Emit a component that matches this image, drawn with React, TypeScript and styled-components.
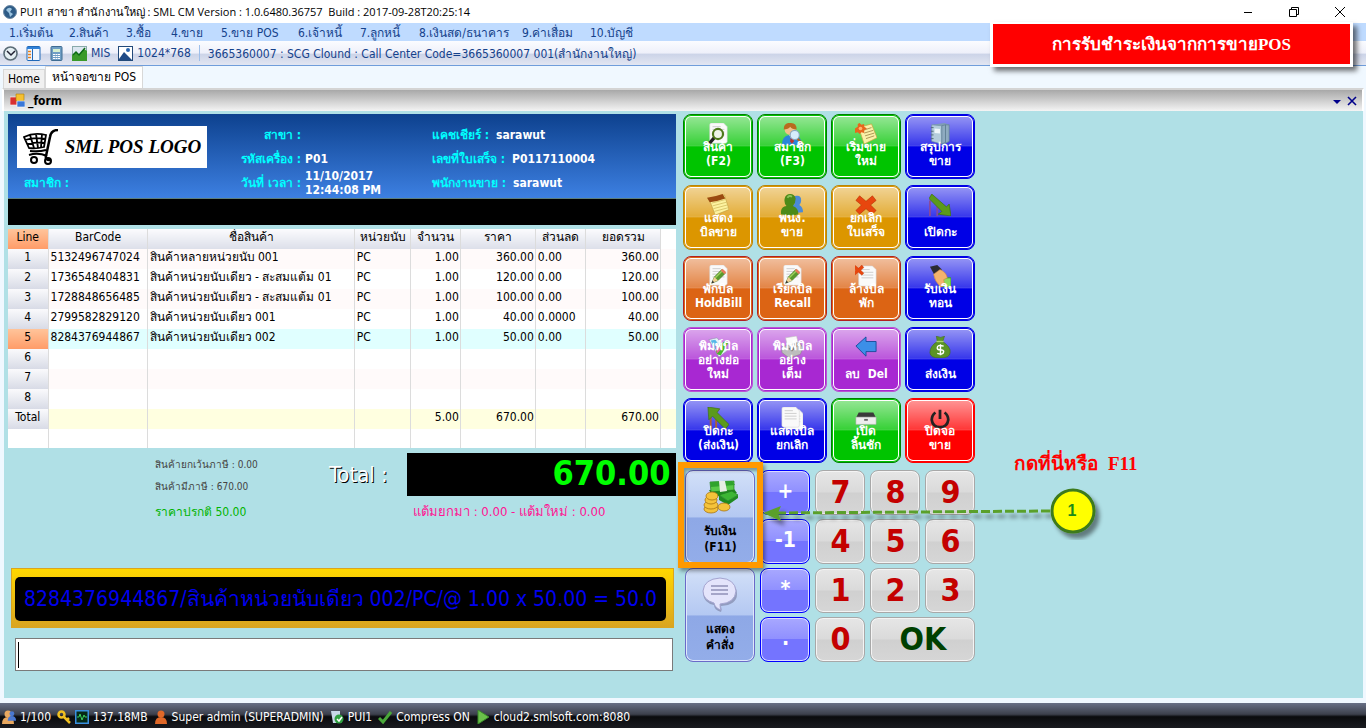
import React from "react";
import styled, { createGlobalStyle } from "styled-components";

const ui = `"DejaVu Sans Condensed", "Noto Sans", sans-serif`;
const serif = `"Liberation Serif", serif`;

const GlobalStyle = createGlobalStyle`
  * { box-sizing: border-box; }
  body { margin: 0; background: #fff; }
  button, input { font: inherit; }
`;

const Page = styled.div`
  position: relative;
  display: flex;
  flex-direction: column;
  min-height: 100vh;
  background: #f0f8ff;
  font-family: ${ui};
  font-size: 12px;
  color: #000;
`;

const TitleBar = styled.header`
  display: flex;
  align-items: center;
  height: 23px;
  padding: 0 18px 0 3px;
  gap: 3px;
  background: #fff;
  font-family: "Open Sans", sans-serif;
  font-size: 11px;
  white-space: pre;
`;

const WindowButtons = styled.div`
  display: flex;
  gap: 30px;
  margin-left: auto;
`;

const PlainButton = styled.button`
  display: flex;
  align-items: center;
  padding: 0;
  border: 0;
  background: none;
  color: inherit;
`;

const MenuBar = styled.nav`
  display: flex;
  align-items: center;
  height: 18px;
  padding-left: 9px;
  gap: 19px;
  background: #bfdbff;
`;

const MenuLink = styled.a<{ $w: number }>`
  width: ${(p) => p.$w}px;
  color: #15428b;
  text-decoration: none;
  white-space: nowrap;
`;

const ToolBar = styled.div`
  display: flex;
  align-items: center;
  height: 25px;
  padding-left: 3px;
  gap: 8px;
  color: #15428b;
  background: linear-gradient(#fbfcff 0%, #eef0fa 50%, #ccd4e8 55%, #e2e6f2 100%);
  border-bottom: 1px solid #6f9ddb;
  white-space: nowrap;
`;

const ToolItem = styled(PlainButton)`
  gap: 4px;
`;

const Divider = styled.span`
  width: 1px;
  height: 16px;
  background: #9ebfea;
`;

const Tabs = styled.div`
  display: flex;
  align-items: flex-end;
  height: 22px;
  padding-left: 3px;
`;

const Tab = styled.button<{ $active?: boolean }>`
  height: ${(p) => (p.$active ? 22 : 19)}px;
  padding: ${(p) => (p.$active ? "0 6px 2px" : "0 4px")};
  border: 1px solid #d8d8d8;
  border-bottom: 0;
  background: ${(p) => (p.$active ? "#fff" : "#f0f0f0")};
  white-space: nowrap;
`;

const FormBar = styled.div`
  display: flex;
  align-items: center;
  height: 23px;
  margin: 0 2px;
  padding: 0 5px 0 6px;
  gap: 3px;
  border: 2px solid #fff;
  border-top-color: #d4d4d4;
  border-bottom: 0;
  background: linear-gradient(#a8a8a8, #f4f4f4);
  font-weight: bold;
`;

const FormTools = styled.div`
  display: flex;
  gap: 5px;
  margin-left: auto;
  color: #00008b;
`;

const Workspace = styled.main`
  flex: 1;
  display: grid;
  grid-template-columns: minmax(560px, 668fr) minmax(292px, 679fr);
  column-gap: 7px;
  padding: 3px 0 27px 4px;
  margin: 0 3px 0 4px;
  background: #b0e0e6;
`;

const Sale = styled.section`
  display: flex;
  flex-direction: column;
`;

const SaleHead = styled.div`
  display: grid;
  grid-template-columns: 200px 215px 1fr;
  grid-template-rows: repeat(3, 24px);
  align-items: center;
  height: 85px;
  padding: 9px 9px 3px;
  border-bottom: 1px solid #5c7f7f;
  background: linear-gradient(#0d418e, #3d80e2);
  color: #fff;
  font-weight: bold;
`;

const Logo = styled.div`
  grid-row: span 2;
  display: flex;
  align-items: center;
  justify-content: space-evenly;
  width: 190px;
  height: 42px;
  background: #fff;
  color: #000;
  font: italic bold 19px ${serif};
  white-space: nowrap;
`;

const Field = styled.div<{ $label?: number }>`
  display: grid;
  grid-template-columns: ${(p) => (p.$label ? `${p.$label}px` : "auto")} 1fr;
  align-items: center;
  column-gap: ${(p) => (p.$label ? 4 : 7)}px;
  line-height: 14px;
  white-space: nowrap;
  & > span { color: #00ffff; text-align: ${(p) => (p.$label ? "right" : "left")}; }
  & > b { white-space: pre; }
`;

const MemberField = styled(Field)`
  padding-left: 7px;
`;

const NoticeStrip = styled.div`
  height: 26px;
  margin-bottom: 4px;
  background: #000;
`;

const Lines = styled.table`
  width: 100%;
  table-layout: fixed;
  border-collapse: collapse;
  background: #fff;
  line-height: 16px;
  tr { height: 20px; }
  tr:last-child { height: 19px; }
  th, td {
    padding: 0 1px 4px 2px;
    font-weight: normal;
    text-align: left;
    white-space: nowrap;
    overflow: hidden;
    border-right: 1px solid #dcdcdc;
  }
  td:last-child, thead th:last-child { border-right: 0; }
`;

const HeadCell = styled.th`
  && { text-align: center; }
  background: linear-gradient(#fbfbfd, #dcdfe9);
`;

const LineHead = styled.th<{ $hot?: boolean }>`
  && { text-align: center; padding-right: 2px; }
  background: ${(p) => (p.$hot ? "linear-gradient(#ffc49a, #ff9c68)" : "linear-gradient(#fafafc, #d8dbe6)")};
`;

const Filler = styled.th`
  background: #fff;
`;

const LineRow = styled.tr<{ $bg: string }>`
  td { background: ${(p) => p.$bg}; }
`;

const NumCell = styled.td`
  && { text-align: right; }
`;

const Totals = styled.div`
  display: grid;
  grid-template-columns: 147px 174px 78px 1fr;
  grid-template-rows: 23px 20px 30px;
  align-items: center;
  margin-top: 5px;
`;

const TaxLine = styled.div`
  grid-column: 2;
  color: #444;
  font-size: 10px;
`;

const TotalLabel = styled.div`
  grid-column: 3;
  grid-row: 1 / span 2;
  color: #fff;
  font-size: 22px;
  text-shadow: 1px 1px 0 #000;
  white-space: nowrap;
`;

const TotalBox = styled.output`
  grid-column: 4;
  grid-row: 1 / span 2;
  height: 43px;
  padding-right: 6px;
  background: #000;
  color: #00ff00;
  font-weight: bold;
  font-size: 34px;
  line-height: 41px;
  text-align: right;
`;

const NormalPrice = styled.div`
  grid-column: 2;
  color: #00b400;
`;

const Points = styled.div`
  grid-column: 4;
  padding-left: 6px;
  color: #ff1493;
  font-size: 13px;
  white-space: nowrap;
`;

const Ticker = styled.div`
  margin: 42px 2px 10px 3px;
  padding: 8px 7px 6px 3px;
  border: 1px solid #daa520;
  background: linear-gradient(#ffd700, #daa520);
`;

const TickerText = styled.div`
  height: 44px;
  padding-left: 9px;
  overflow: hidden;
  border-radius: 5px;
  background: #000;
  color: #0000ee;
  font-size: 21px;
  line-height: 44px;
  white-space: nowrap;
`;

const Entry = styled.label`
  display: flex;
  align-items: center;
  height: 33px;
  margin: 0 3px 0 7px;
  padding-left: 2px;
  border: 1px solid #7a7a7a;
  background: #fff;
`;

const Caret = styled.span`
  width: 1px;
  height: 26px;
  background: #000;
`;

const EntryInput = styled.input`
  flex: 1;
  height: 100%;
  border: 0;
  outline: 0;
  background: transparent;
  font-size: 20px;
  caret-color: transparent;
`;

const Controls = styled.section`
  display: flex;
  flex-direction: column;
  align-items: flex-start;
  gap: 7px;
`;

const ActionGrid = styled.div`
  display: grid;
  grid-template-columns: repeat(4, 70px);
  grid-auto-rows: 65px;
  gap: 6px 4px;
`;

type Tone = { base: string; edge: string };
const tones: Record<string, Tone> = {
  green: { base: "#00c400", edge: "#008000" },
  blue: { base: "#0000e6", edge: "#0000e6" },
  gold: { base: "#dc9600", edge: "#b8860b" },
  orange: { base: "#dc6414", edge: "#b22222" },
  purple: { base: "#a828d2", edge: "#ba55d3" },
  red: { base: "#ff0000", edge: "#ff0000" },
};

const ActionButton = styled.button<{ $tone: Tone }>`
  position: relative;
  display: flex;
  align-items: flex-end;
  justify-content: center;
  padding: 0 2px 10px;
  border: 1px solid ${(p) => p.$tone.edge};
  border-radius: 8px;
  background:
    linear-gradient(rgba(255, 255, 255, 0.6), rgba(255, 255, 255, 0.22) 48%, rgba(255, 255, 255, 0.3) 48%, rgba(255, 255, 255, 0) 51%),
    ${(p) => p.$tone.base};
  box-shadow: inset 0 0 0 1px ${(p) => p.$tone.base}, inset 0 0 0 2px #fff;
  color: #fff;
  font-weight: bold;
  line-height: 14px;
  text-align: center;
  white-space: pre;
`;

const ActionIcon = styled.span`
  position: absolute;
  top: 8px;
  left: 50%;
  width: 22px;
  height: 22px;
  margin-left: -11px;
`;

const ActionText = styled.span`
  position: relative;
`;

const Keypad = styled.div`
  position: relative;
  display: grid;
  grid-template-columns: 70px repeat(4, 50px);
  grid-auto-rows: 45px;
  gap: 4px 5px;
  margin-left: 2px;
`;

const WideAction = styled.button`
  grid-column: 1;
  grid-row: span 2;
  display: flex;
  flex-direction: column;
  align-items: center;
  gap: 8px;
  padding: 8px 0 0;
  border: 1px solid #6a6ac8;
  border-radius: 8px;
  background: linear-gradient(#d2e0f8, #b4c8f2 50%, #8ea8e6 51%, #93ade9);
  box-shadow: inset 0 0 0 1px #dfe8fb;
  font-weight: bold;
  line-height: 16px;
  white-space: pre;
`;

const OpKey = styled.button`
  grid-column: 2;
  padding: 0 0 4px;
  border: 1px solid #0000ff;
  border-radius: 8px;
  background: linear-gradient(#a8a8ff, #9090ff 48%, #7474ff 50%, #7474ff);
  box-shadow: inset 0 0 0 1px #dcdcff;
  color: #fff;
  font-weight: bold;
  font-size: 21px;
`;

const DigitKey = styled.button<{ $ok?: boolean }>`
  grid-column: ${(p) => (p.$ok ? "span 2" : "auto")};
  padding: 0 0 2px;
  border: 1px solid #a8a8a8;
  border-radius: 8px;
  background: linear-gradient(#e6e6e6, #dadada 49%, #d0d0d0 51%, #d6d6d6);
  box-shadow: inset 0 0 0 1px #f4f4f4;
  color: ${(p) => (p.$ok ? "#004000" : "#c40000")};
  font-weight: bold;
  font-size: 32px;
  line-height: 40px;
`;

const Highlight = styled.div`
  position: absolute;
  top: -8px;
  left: -7px;
  width: 85px;
  height: 106px;
  border: 6px solid #ff9900;
  box-shadow: 2px 3px 4px rgba(0, 0, 0, 0.4), inset 2px 3px 3px rgba(0, 0, 0, 0.3);
  pointer-events: none;
`;

const Pointer = styled.svg`
  position: absolute;
  top: 10px;
  left: 76px;
  pointer-events: none;
`;

const PointerHint = styled.p`
  position: absolute;
  top: -20px;
  left: 329px;
  margin: 0;
  color: #ff0000;
  font: bold 19px/28px ${serif};
  white-space: pre;
`;

const Banner = styled.h1`
  position: absolute;
  top: 22px;
  right: 13px;
  width: 363px;
  height: 45px;
  margin: 0;
  border: 3px solid #fff;
  border-top-width: 2px;
  background: #ff0000;
  box-shadow: 4px 4px 5px rgba(0, 0, 0, 0.55);
  color: #fff;
  font: bold 17px/42px ${serif};
  text-align: center;
  white-space: nowrap;
`;

const StatusBar = styled.footer`
  display: flex;
  align-items: center;
  height: 25px;
  margin-top: 5px;
  padding: 3px 0 0 1px;
  gap: 4px;
  background: linear-gradient(#687086, #3c404c 45%, #0a0b0e 55%, #1a1b20);
  color: #fff;
  white-space: nowrap;
  & > span { margin-right: 2px; }
`;

const Drawing = styled.svg`
  display: block;
  flex: none;
`;

const Svg = ({ s = 24, w, children }: { s?: number; w?: number; children: React.ReactNode }) => (
  <Drawing width={w ?? s} height={w ?? s} viewBox={`0 0 ${s} ${s}`} fill="none" aria-hidden="true">
    {children}
  </Drawing>
);

const Paper = ({ x = 2, y = 0 }: { x?: number; y?: number }) => (
  <g transform={`translate(${x} ${y})`}>
    <path d="M2 0h13l4 4v16q0 2-2 2H2q-2 0-2-2V2q0-2 2-2z" fill="#fafafa" stroke="#d4d4d4" strokeWidth=".6" />
    <path d="M3 4h9M3 7h13M3 10h13M3 13h13" stroke="#ccc" />
  </g>
);

const Pencil = () => (
  <>
    <path d="M5 20l3-7 8-8 4 4-8 8z" fill="#5a9a2c" stroke="#3c6e1a" strokeWidth=".6" />
    <path d="M9 14l8-8" stroke="#9ed05e" strokeWidth="1.5" />
    <path d="M5 20l3-7 4 4z" fill="#f1cf92" />
    <path d="M5 20l1-3 2 2z" fill="#333" />
    <path d="M15 6l2-2 4 4-2 2z" fill="#e77b5c" />
  </>
);

const Cross = ({ t }: { t?: string }) => (
  <path
    transform={t}
    d="M5 2l7 6 7-6 4 5-6 5 6 6-4 4-7-6-7 6-4-4 6-6-6-5z"
    fill="#e8460e"
    stroke="#b83508"
    strokeWidth=".7"
  />
);

const icons: Record<string, React.ReactNode> = {
  search: (
    <>
      <Paper x={3} />
      <path d="M8 16l-6 7" stroke="#222" strokeWidth="3.5" />
      <circle cx="12" cy="12" r="5.5" fill="#eef4ea" stroke="#4e7a1c" strokeWidth="2.4" />
    </>
  ),
  member: (
    <>
      <path d="M1 24q0-10 8-11h6q8 2 8 11z" fill="#2a86d8" />
      <path d="M9 13l3 6 3-6z" fill="#fff" />
      <path d="M11 14l-1 6 2 3 2-3-1-6z" fill="#b33" />
      <circle cx="10" cy="7" r="6" fill="#f2c08a" />
      <path d="M3 7q0-8 8-7 6 0 6 7-5 0-7-3-2 3-7 3z" fill="#b96a1e" />
      <path d="M18 17l5 6" stroke="#b5651d" strokeWidth="2.5" />
      <circle cx="15" cy="13" r="5" fill="#d6ecfb" stroke="#8aa8bd" strokeWidth="1.2" />
    </>
  ),
  note: (
    <>
      <path d="M4 5l14-4 6 15-14 7z" fill="#fbf0a8" stroke="#c8a840" strokeWidth=".8" />
      <path d="M9 8l9-3M10 11l10-3M11 14l10-3M12 17l9-3" stroke="#a89050" />
      <path d="M5 0l2 2 3-1v3l3 2-3 2v3l-3-1-2 2-2-2-3 1V8L0 6l3-2V1z" fill="#e8661c" />
      <circle cx="6" cy="6" r="2" fill="#ffb46a" />
    </>
  ),
  ledger: (
    <>
      <path d="M3 2l14-2 5 2v18l-5 3-14-3z" fill="#7f9db4" />
      <path d="M3 2l11 1v20L3 20z" fill="#b4cddc" stroke="#6f8ea4" strokeWidth=".7" />
      <path d="M14 3l4-1v19l-4 2zM18 2l4 0v18l-4 2z" fill="#8eabc0" stroke="#5d7b91" strokeWidth=".7" />
      <path d="M6 6l6 .5v5L6 11z" fill="#eef6fa" />
      <path d="M2 5h3M2 9h3M2 13h3M2 17h3" stroke="#51677a" />
    </>
  ),
  notepad: (
    <>
      <path d="M2 5l17-4 5 16-15 6z" fill="#fdf3a0" stroke="#c0a040" strokeWidth=".7" />
      <path d="M5 10l15-4M6 13l15-4M7 16l15-4M8 19l15-4" stroke="#d8c468" />
      <path d="M0 4q9-1 17-4l3 5Q12 8 3 9z" fill="#9a4a10" />
    </>
  ),
  people: (
    <>
      <path d="M10 21q0-8 5-10-2-2-2-5 1-5 5-4 4 0 4 5 0 3-2 5 4 2 4 8z" fill="#4a8ad8" />
      <path d="M0 22q-1-8 6-9-3-3-2-8 1-5 6-5t6 5q0 5-3 8 6 2 6 9-9 3-19 0z" fill="#4c8a18" />
      <path d="M7 4q2-3 5-1" stroke="#8cc45a" strokeWidth="2" />
    </>
  ),
  cross: <Cross />,
  down: (
    <>
      <path d="M1 7v17M9 12v12" stroke="#8a4a9a" strokeWidth="2" />
      <path d="M3 0L19 14l3-3 2 13-14-2 4-3L0 5z" fill="#5b9a1c" stroke="#3d6f10" strokeWidth=".7" />
    </>
  ),
  up: (
    <>
      <path d="M4 8v16M10 13v11" stroke="#b06030" strokeWidth="2" />
      <path d="M1 0l13 2-3 4 13 13-4 5L6 10l-4 4z" fill="#5b9a1c" stroke="#3d6f10" strokeWidth=".7" />
    </>
  ),
  edit: (
    <>
      <Paper x={3} />
      <Pencil />
    </>
  ),
  clear: (
    <>
      <Paper x={4} y={1} />
      <Cross t="translate(-3 -1) scale(.55)" />
    </>
  ),
  pay: (
    <>
      <path d="M13 14h11v10H11z" fill="#8edb5a" stroke="#2f9c2b" />
      <path d="M1 2l8-2 5 5-8 6z" fill="#2b2b33" />
      <path d="M5 10l7-5q7 3 8 9l-4 2 1 6-4 2q-7-6-8-14z" fill="#f3b36d" stroke="#c98240" strokeWidth=".6" />
    </>
  ),
  printTag: (
    <>
      <path d="M2 4l9-2 11 14-9 7z" fill="#e6f2f8" stroke="#88a" strokeWidth=".6" />
      <path d="M4 5l5-1 5 7-5 4z" fill="#56b8e8" />
      <path d="M10 14l10-9 3 3-8 13q-6 0-5-7z" fill="#48b82c" />
      <path d="M9 10l7 4-5 5z" fill="#e85ca0" />
    </>
  ),
  printer: (
    <>
      <path d="M5 2l12-2 3 13-12 4z" fill="#fafafa" stroke="#bbb" strokeWidth=".6" />
      <path d="M1 12l19-5 4 6-3 7-12 4-8-6z" fill="#bdbdbd" stroke="#888" strokeWidth=".6" />
      <path d="M8 14l9-7 3 2-8 8z" fill="#777" />
    </>
  ),
  left: <path d="M1 11L12 1v5h11v11H12v5z" fill="#3c8fe8" stroke="#174a9a" />,
  money: (
    <>
      <path d="M8 0q5 3 9 0l-2 6q9 6 8 12 0 6-11 6T1 18Q1 11 9 6z" fill="#5b9426" stroke="#3e6c14" strokeWidth=".6" />
      <path d="M8 6h8" stroke="#a8d070" strokeWidth="1.5" />
      <path d="M16 11q-7-2-7 2 0 2 3 2 4 0 4 2 0 4-7 2M12.500 9v12" stroke="#fff" strokeWidth="1.600" />
    </>
  ),
  pages: (
    <>
      <Paper x={5} y={3} />
      <Paper x={1} />
    </>
  ),
  drawer: (
    <>
      <path d="M4 6h16l3 6H1z" fill="#3a3a3a" />
      <path d="M1 11h22v8H1z" fill="#eee" stroke="#aaa" strokeWidth=".6" />
      <path d="M10 14h4" stroke="#666" strokeWidth="2" />
    </>
  ),
  power: <path d="M7 6q-4 3-4 8 1 8 9 8t9-8q0-5-4-8M12 3v10" stroke="#222" strokeWidth="3" />,
};

const coins = [
  [9, 30, 7],
  [9, 26, 7],
  [22, 28, 6],
  [9, 21, 6],
  [10, 17, 6],
];

const Cash = () => (
  <Svg s={36}>
    <path d="M7 11l4 7 24-4-3-4z" fill="#1f8a20" />
    <path d="M8 3l24-1v9l-23 2z" fill="#58c948" stroke="#1f7a20" strokeWidth=".7" />
    <path d="M8 3l22-1 3 4-24 2z" fill="#2fa32c" />
    <path d="M17 2h6l2 10-7 1z" fill="#e6eee2" />
    <path d="M17 16l13-4 6 4-10 6z" fill="#3cb634" stroke="#1f7a20" strokeWidth=".7" />
    <path d="M17 16l9 6v4l-9-5zM26 22l10-6v3l-10 7z" fill="#1f8a20" />
    {coins.map(([x, y, r]) => (
      <ellipse key={`${x}-${y}`} cx={x} cy={y} rx={r} ry={4} fill="#f5c33a" stroke="#a87410" strokeWidth=".8" />
    ))}
  </Svg>
);

const Speech = () => (
  <Svg s={36}>
    <path d="M18 3q17 1 17 14 0 11-16 12 1 4 0 6-7-2-7-7Q2 26 1 17 1 4 18 3z" fill="#777c9c" opacity=".6" />
    <path d="M18 1q15 1 16 13-1 12-16 13 0 4 1 6-6-2-7-7Q1 23 1 14 2 2 18 1z" fill="#e4e4fb" stroke="#a4a4d0" />
    <path d="M9 9h17M9 13h17M9 17h17" stroke="#9090b8" strokeWidth="1.500" />
  </Svg>
);

const Cart = () => (
  <Svg s={36}>
    <path d="M35 1q-7 0-8 7l-4 19q-1 4 4 4" stroke="#000" strokeWidth="2.500" />
    <path d="M1 8q10-5 22-2l-2 12q-8 2-15 1zM2 11q10-3 20-1M4 15q9-2 18-1M7 6l4 13M13 5l2 14M19 5l-1 13" stroke="#000" strokeWidth="1.800" />
    <path d="M7 22q9 1 16-1M6 26q9-3 18 1" stroke="#000" strokeWidth="2" />
    <circle cx="11" cy="31" r="3" stroke="#000" strokeWidth="2" />
    <circle cx="25" cy="32" r="3" stroke="#000" strokeWidth="2" />
  </Svg>
);

const Person = ({ fill }: { fill: string }) => (
  <g>
    <circle cx="7" cy="4" r="3.500" fill={fill} />
    <path d="M1 14q0-7 6-7t6 7z" fill={fill} />
  </g>
);

const actions: [string, string, string][] = [
  ["green", "search", "สินค้า\n(F2)"],
  ["green", "member", "สมาชิก\n(F3)"],
  ["green", "note", "เริ่มขาย\nใหม่"],
  ["blue", "ledger", "สรุปการ\nขาย"],
  ["gold", "notepad", "แสดง\nบิลขาย"],
  ["gold", "people", "พนง.\nขาย"],
  ["gold", "cross", "ยกเลิก\nใบเสร็จ"],
  ["blue", "down", "เปิดกะ"],
  ["orange", "edit", "พักบิล\nHoldBill"],
  ["orange", "edit", "เรียกบิล\nRecall"],
  ["orange", "clear", "ล้างบิล\nพัก"],
  ["blue", "pay", "รับเงิน\nทอน"],
  ["purple", "printTag", "พิมพ์บิล\nอย่างย่อ\nใหม่"],
  ["purple", "printer", "พิมพ์บิล\nอย่าง\nเต็ม"],
  ["purple", "left", "ลบ  Del"],
  ["blue", "money", "ส่งเงิน"],
  ["blue", "up", "ปิดกะ\n(ส่งเงิน)"],
  ["blue", "pages", "แสดงบิล\nยกเลิก"],
  ["green", "drawer", "เปิด\nลิ้นชัก"],
  ["red", "power", "ปิดจอ\nขาย"],
];

const menu: [string, number][] = [
  ["1.เริ่มต้น", 41],
  ["2.สินค้า", 38],
  ["3.ซื้อ", 26],
  ["4.ขาย", 31],
  ["5.ขาย POS", 58],
  ["6.เจ้าหนี้", 43],
  ["7.ลูกหนี้", 40],
  ["8.เงินสด/ธนาคาร", 84],
  ["9.ค่าเสื่อม", 49],
  ["10.บัญชี", 45],
];

const rows: string[][] = [
  ["5132496747024", "สินค้าหลายหน่วยนับ 001", "PC", "1.00", "360.00", "0.00", "360.00"],
  ["1736548404831", "สินค้าหน่วยนับเดียว - สะสมแต้ม 01", "PC", "1.00", "120.00", "0.00", "120.00"],
  ["1728848656485", "สินค้าหน่วยนับเดียว - สะสมแต้ม 01", "PC", "1.00", "100.00", "0.00", "100.00"],
  ["2799582829120", "สินค้าหน่วยนับเดียว 001", "PC", "1.00", "40.00", "0.0000", "40.00"],
  ["8284376944867", "สินค้าหน่วยนับเดียว 002", "PC", "1.00", "50.00", "0.00", "50.00"],
  ["", "", "", "", "", "", ""],
  ["", "", "", "", "", "", ""],
  ["", "", "", "", "", "", ""],
];

const colShares = [40, 99, 207, 56, 50, 75, 50, 75, 16];
const columns = ["BarCode", "ชื่อสินค้า", "หน่วยนับ", "จำนวน", "ราคา", "ส่วนลด", "ยอดรวม"];
const numeric = [false, false, false, true, true, false, true];

const Cells = ({ values }: { values: string[] }) => (
  <>
    {values.map((v, i) => (numeric[i] ? <NumCell key={i}>{v}</NumCell> : <td key={i}>{v}</td>))}
    <td />
  </>
);

export default function App() {
  return (
    <Page>
      <GlobalStyle />
      <TitleBar>
        <Svg s={14}>
          <circle cx="7" cy="7" r="6.500" fill="#2d5b86" stroke="#6f8ba6" />
          <path d="M3 5q3-4 6-1l-2 3 3 2-3 3-1-4z" fill="#9cc4e0" />
        </Svg>
        PUI1 สาขา สำนักงานใหญ่ : SML CM Version : 1.0.6480.36757  Build : 2017-09-28T20:25:14
        <WindowButtons>
          <PlainButton aria-label="Minimize">
            <Svg s={16}><path d="M4 8.500h8" stroke="#000" /></Svg>
          </PlainButton>
          <PlainButton aria-label="Restore">
            <Svg s={16}><path d="M3.500 5.500h7v7h-7zM5.500 5V3.500h7v7H11" stroke="#000" /></Svg>
          </PlainButton>
          <PlainButton aria-label="Close">
            <Svg s={16}><path d="M3 3l10 10M13 3L3 13" stroke="#000" /></Svg>
          </PlainButton>
        </WindowButtons>
      </TitleBar>
      <MenuBar>
        {menu.map(([t, w]) => (
          <MenuLink key={t} href="#" $w={w}>{t}</MenuLink>
        ))}
      </MenuBar>
      <ToolBar>
        <ToolItem aria-label="Clock">
          <Svg s={15}>
            <circle cx="7.500" cy="7.500" r="6.500" fill="#e4eef2" stroke="#5b6c76" strokeWidth="1.600" />
            <path d="M4 5l4 4 4-4" stroke="#223" strokeWidth="1.500" />
          </Svg>
        </ToolItem>
        <ToolItem aria-label="Layout">
          <Svg s={15}>
            <rect x="1" y=".5" width="13" height="14" rx="1" fill="#eef6ff" stroke="#1f68b8" />
            <path d="M1 1h13v2H1z" fill="#2f80d8" />
            <path d="M2 5.500h3M2 8.500h3M2 11.500h3" stroke="#e8801c" strokeWidth="1.500" />
            <path d="M6.500 3v11" stroke="#1f68b8" />
          </Svg>
        </ToolItem>
        <ToolItem aria-label="Calculator">
          <Svg s={15}>
            <rect x="2" y=".5" width="11" height="14" rx="1" fill="#6f9ec4" stroke="#3f6c92" />
            <path d="M4 3h7v3H4z" fill="#d6f0d0" />
            <path d="M4 8.500h7M4 10.500h7M4 12.500h7" stroke="#fff" strokeDasharray="2 .5" />
          </Svg>
        </ToolItem>
        <ToolItem>
          <Svg s={15}>
            <rect x=".5" y=".5" width="14" height="14" fill="#dbe6f0" stroke="#8aa" />
            <path d="M0 15V9l4-3 3 3 5-6 3 2v10z" fill="#3a9a2a" />
            <path d="M1 9l3-3 3 3 6-7" stroke="#0c6a14" strokeWidth="1.500" />
          </Svg>
          MIS
        </ToolItem>
        <ToolItem>
          <Svg s={15}>
            <rect x=".5" y=".5" width="14" height="14" fill="#fff" stroke="#234a7a" />
            <path d="M1 13l5-7 8 8H1z" fill="#1f4a86" />
            <circle cx="10" cy="4" r="2" fill="#2b66b0" />
          </Svg>
          1024*768
        </ToolItem>
        <Divider />
        <span>3665360007 : SCG Clound : Call Center Code=3665360007 001(สำนักงานใหญ่)</span>
      </ToolBar>
      <Tabs>
        <Tab>Home</Tab>
        <Tab $active>หน้าจอขาย POS</Tab>
      </Tabs>
      <FormBar>
        <Svg s={15}>
          <path d="M0 4h7v8H0z" fill="#d83030" stroke="#fff" strokeWidth=".6" />
          <path d="M6 1h8v7H6z" fill="#f6c030" stroke="#a87808" strokeWidth=".6" />
          <path d="M7 8h8v6H7z" fill="#3b78d8" stroke="#fff" strokeWidth=".6" />
        </Svg>
        _form
        <FormTools>
          <PlainButton aria-label="Window list">
            <Svg s={10}><path d="M1 4h8L5 8z" fill="currentColor" /></Svg>
          </PlainButton>
          <PlainButton aria-label="Close form">
            <Svg s={10}><path d="M1 1l8 8M9 1L1 9" stroke="currentColor" strokeWidth="1.600" /></Svg>
          </PlainButton>
        </FormTools>
      </FormBar>
      <Workspace>
        <Sale>
          <SaleHead>
            <Logo><Cart />SML POS LOGO</Logo>
            <Field $label={84}><span>สาขา :</span></Field>
            <Field><span>แคชเชียร์ :</span><b>sarawut</b></Field>
            <Field $label={84}><span>รหัสเครื่อง :</span><b>P01</b></Field>
            <Field><span>เลขที่ใบเสร็จ :</span><b>P0117110004</b></Field>
            <MemberField><span>สมาชิก :</span></MemberField>
            <Field $label={84}><span>วันที่ เวลา :</span><b>{"11/10/2017\n12:44:08 PM"}</b></Field>
            <Field><span>พนักงานขาย :</span><b>sarawut</b></Field>
          </SaleHead>
          <NoticeStrip />
          <Lines>
            <colgroup>
              {colShares.map((c, i) => (
                <col key={i} style={{ width: `${(c / 668) * 100}%` }} />
              ))}
            </colgroup>
            <thead>
              <tr>
                <LineHead scope="col" $hot>Line</LineHead>
                {columns.map((c) => <HeadCell key={c} scope="col">{c}</HeadCell>)}
                <Filler aria-hidden="true" />
              </tr>
            </thead>
            <tbody>
              {rows.map((r, i) => (
                <LineRow key={i} $bg={i === 4 ? "#e0ffff" : i % 2 ? "#fff" : "#fffafa"}>
                  <LineHead scope="row" $hot={i === 4}>{i + 1}</LineHead>
                  <Cells values={r} />
                </LineRow>
              ))}
              <LineRow $bg="#ffffe0">
                <LineHead scope="row">Total</LineHead>
                <Cells values={["", "", "", "5.00", "670.00", "", "670.00"]} />
              </LineRow>
              <LineRow $bg="#fff">
                <td />
                <Cells values={["", "", "", "", "", "", ""]} />
              </LineRow>
            </tbody>
          </Lines>
          <Totals>
            <TaxLine>สินค้ายกเว้นภาษี : 0.00</TaxLine>
            <TaxLine>สินค้ามีภาษี : 670.00</TaxLine>
            <TotalLabel>Total :</TotalLabel>
            <TotalBox>670.00</TotalBox>
            <NormalPrice>ราคาปรกติ 50.00</NormalPrice>
            <Points>แต้มยกมา : 0.00 - แต้มใหม่ : 0.00</Points>
          </Totals>
          <Ticker>
            <TickerText>8284376944867/สินค้าหน่วยนับเดียว 002/PC/@ 1.00 x 50.00 = 50.0</TickerText>
          </Ticker>
          <Entry>
            <Caret />
            <EntryInput aria-label="Barcode" />
          </Entry>
        </Sale>
        <Controls>
          <ActionGrid>
            {actions.map(([tone, icon, text], i) => (
              <ActionButton key={i} $tone={tones[tone]}>
                <ActionIcon><Svg w={22}>{icons[icon]}</Svg></ActionIcon>
                <ActionText>{text}</ActionText>
              </ActionButton>
            ))}
          </ActionGrid>
          <Keypad>
            <WideAction><Cash />{"รับเงิน\n(F11)"}</WideAction>
            <OpKey>+</OpKey>
            <DigitKey>7</DigitKey>
            <DigitKey>8</DigitKey>
            <DigitKey>9</DigitKey>
            <OpKey>-1</OpKey>
            <DigitKey>4</DigitKey>
            <DigitKey>5</DigitKey>
            <DigitKey>6</DigitKey>
            <WideAction><Speech />{"แสดง\nคำสั่ง"}</WideAction>
            <OpKey>*</OpKey>
            <DigitKey>1</DigitKey>
            <DigitKey>2</DigitKey>
            <DigitKey>3</DigitKey>
            <OpKey>.</OpKey>
            <DigitKey>0</DigitKey>
            <DigitKey $ok>OK</DigitKey>
            <Highlight />
            <Pointer width="350" height="60" viewBox="0 0 350 60" aria-hidden="true">
              <defs>
                <filter id="drop" x="-10%" y="-100%" width="120%" height="400%">
                  <feDropShadow dx="4" dy="5" stdDeviation="2" floodOpacity=".45" />
                </filter>
              </defs>
              <g filter="url(#drop)">
                <path d="M16 33L290 31" stroke="#5aa02c" strokeWidth="3" strokeDasharray="9 3" fill="none" />
                <path d="M2 33l18-7-3 7 3 8z" fill="#5aa02c" />
                <circle cx="312" cy="31" r="21" fill="#ffff00" stroke="#3d7a1c" strokeWidth="3" />
              </g>
              <text x="311" y="36" textAnchor="middle" fill="#1a8a1a" fontFamily="Liberation Sans, sans-serif" fontWeight="bold" fontSize="16">1</text>
            </Pointer>
            <PointerHint>กดที่นี่หรือ  F11</PointerHint>
          </Keypad>
        </Controls>
      </Workspace>
      <StatusBar>
        <Svg s={15}><Person fill="#e8a860" /><g transform="translate(6 1) scale(.7)"><Person fill="#4a78d0" /></g></Svg>
        <span>1/100</span>
        <Svg s={14}><circle cx="4.500" cy="4.500" r="3" stroke="#f0c020" strokeWidth="2.500" /><path d="M7 7l6 6M10 10l2-2" stroke="#f0c020" strokeWidth="2.500" /></Svg>
        <Svg s={14}><rect x=".5" y=".5" width="13" height="13" fill="#062a18" stroke="#3a90e0" strokeWidth="2" /><path d="M2 7h2l1-3 2 6 2-5 1 2h2" stroke="#3ad060" /></Svg>
        <span>137.18MB</span>
        <Svg s={14}><Person fill="#e06828" /></Svg>
        <span>Super admin (SUPERADMIN)</span>
        <Svg s={14}><path d="M1 1h9v12H3z" fill="#c8d8e8" /><circle cx="9" cy="9" r="4.500" fill="#2fa040" /><path d="M7 9l2 2 3-4" stroke="#fff" strokeWidth="1.500" /></Svg>
        <span>PUI1</span>
        <Svg s={14}><path d="M1 8l4 4 8-10" stroke="#4aa83a" strokeWidth="3" /></Svg>
        <span>Compress ON</span>
        <Svg s={14}><path d="M2 0l11 7-11 7z" fill="#6ac04a" stroke="#3a8a2a" /></Svg>
        <span>cloud2.smlsoft.com:8080</span>
      </StatusBar>
      <Banner>การรับชำระเงินจากการขายPOS</Banner>
    </Page>
  );
}
